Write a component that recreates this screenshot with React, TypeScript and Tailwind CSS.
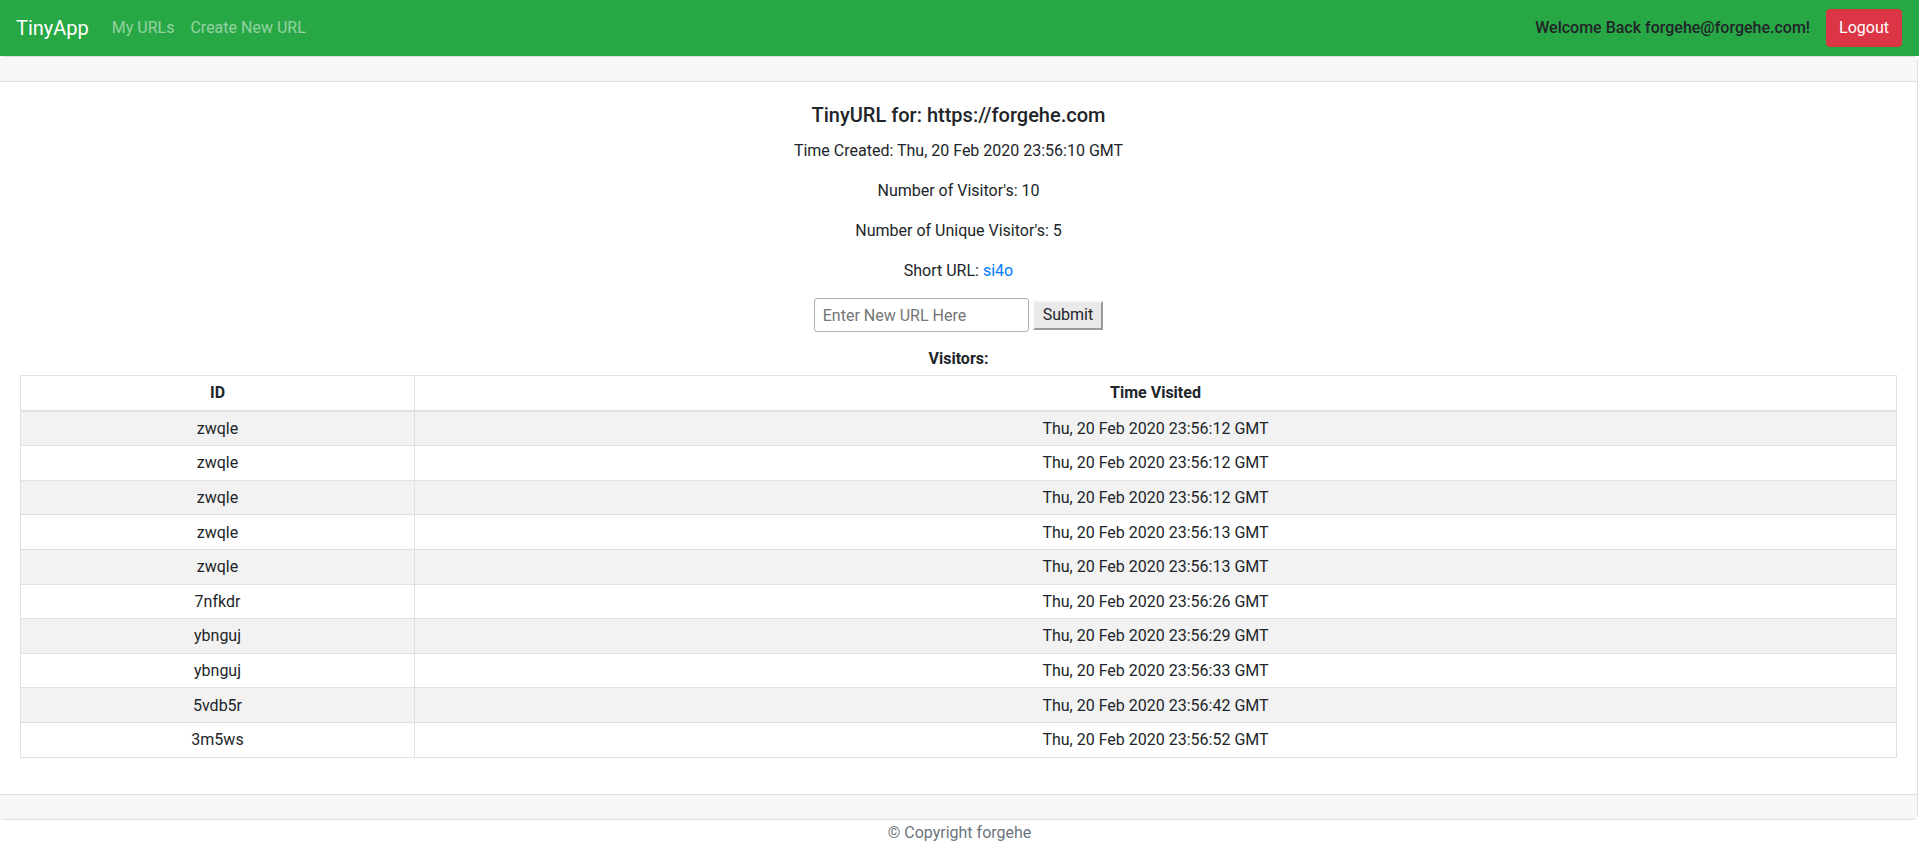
const VISITS = [
  { id: "zwqle", time: "Thu, 20 Feb 2020 23:56:12 GMT" },
  { id: "zwqle", time: "Thu, 20 Feb 2020 23:56:12 GMT" },
  { id: "zwqle", time: "Thu, 20 Feb 2020 23:56:12 GMT" },
  { id: "zwqle", time: "Thu, 20 Feb 2020 23:56:13 GMT" },
  { id: "zwqle", time: "Thu, 20 Feb 2020 23:56:13 GMT" },
  { id: "7nfkdr", time: "Thu, 20 Feb 2020 23:56:26 GMT" },
  { id: "ybnguj", time: "Thu, 20 Feb 2020 23:56:29 GMT" },
  { id: "ybnguj", time: "Thu, 20 Feb 2020 23:56:33 GMT" },
  { id: "5vdb5r", time: "Thu, 20 Feb 2020 23:56:42 GMT" },
  { id: "3m5ws", time: "Thu, 20 Feb 2020 23:56:52 GMT" },
];

const Navbar = () => {
  return (
    <nav className="flex h-14 items-center justify-between bg-[#28a745] pr-[17px] pl-4">
      <div className="flex items-center">
        <a className="mr-[15px] text-xl leading-[30px] text-white">TinyApp</a>
        <a className="px-2 text-white/50">My URLs</a>
        <a className="px-2 text-white/50">Create New URL</a>
      </div>
      <div className="flex items-center gap-4">
        <span className="font-medium text-[#212529]">
          Welcome Back forgehe@forgehe.com!
        </span>
        <button className="h-[38px] rounded border border-[#dc3545] bg-[#dc3545] px-3 text-white">
          Logout
        </button>
      </div>
    </nav>
  );
};

const VisitorTable = () => {
  return (
    <table className="mb-4 w-full border-collapse border border-[#dee2e6] text-center">
      <thead>
        <tr>
          <th className="w-[394px] border border-b-2 border-[#dee2e6] py-[4.8px] font-bold">
            ID
          </th>
          <th className="border border-b-2 border-[#dee2e6] py-[4.8px] font-bold">
            Time Visited
          </th>
        </tr>
      </thead>
      <tbody>
        {VISITS.map((visit, i) => (
          <tr key={i} className={i % 2 === 0 ? "bg-[#f2f2f2]" : "bg-white"}>
            <td className="border border-[#dee2e6] pt-[5.3px] pb-[4.3px]">{visit.id}</td>
            <td className="border border-[#dee2e6] pt-[5.3px] pb-[4.3px]">{visit.time}</td>
          </tr>
        ))}
      </tbody>
    </table>
  );
};

export default function App() {
  return (
    <div className="min-h-[861px] overflow-hidden bg-white font-['Roboto','Liberation_Sans',sans-serif] text-base leading-6 text-[#212529]">
      <Navbar />
      <div className="mr-px -ml-px rounded border border-[#dfdfdf]">
        <div className="h-[24px] box-content border-b border-[#dfdfdf] bg-[#f7f7f7]" />
        <div className="flex flex-col items-center p-5 text-center">
          <h5 className="mt-px mb-3 text-xl leading-6 font-medium">
            TinyURL for: https://forgehe.com
          </h5>
          <p className="mb-4">Time Created: Thu, 20 Feb 2020 23:56:10 GMT</p>
          <p className="mb-4">Number of Visitor's: 10</p>
          <p className="mb-4">Number of Unique Visitor's: 5</p>
          <p className="mb-4">
            Short URL: <a className="text-[#007bff]">si4o</a>
          </p>
          <form className="-mt-px flex h-[34px] items-center gap-1">
            <input
              type="text"
              placeholder="Enter New URL Here"
              className="h-[34px] w-[215px] rounded-[3px] border border-[#b0b0b0] px-2 text-base placeholder:text-[#757575]"
            />
            <button
              type="button"
              className="h-[29px] border-2 border-t-[#f0f0f0] border-l-[#f0f0f0] border-r-[#9a9a9a] border-b-[#9a9a9a] bg-[#e9e9e9] px-[8px] leading-5 text-[#212529]"
            >
              Submit
            </button>
          </form>
          <p className="mt-[15px] mb-1 font-bold">Visitors:</p>
          <VisitorTable />
        </div>
        <div className="h-[24px] box-content border-t border-[#dfdfdf] bg-[#f7f7f7]" />
      </div>
      <p className="mt-[1px] text-center text-[#6c757d]">© Copyright forgehe</p>
    </div>
  );
}
